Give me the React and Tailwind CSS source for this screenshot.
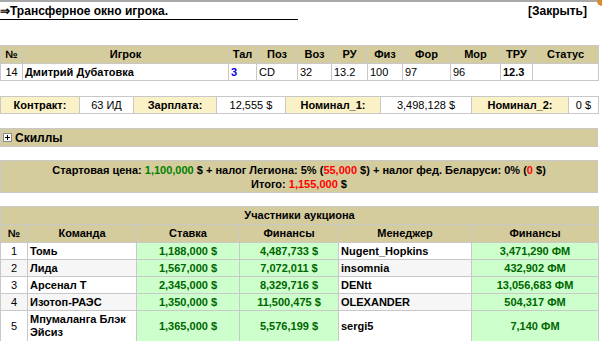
import React from 'react';

const player = {
    num: 14, name: 'Дмитрий Дубатовка', tal: 3, pos: 'CD', age: 32,
    ru: '13.2', fiz: 100, form: 97, mor: 96, tru: '12.3', status: '',
};

const bids = [
    { n: 1, team: 'Томь', bid: '1,188,000 $', fin: '4,487,733 $', manager: 'Nugent_Hopkins', mfin: '3,471,290 ФМ' },
    { n: 2, team: 'Лида', bid: '1,567,000 $', fin: '7,072,011 $', manager: 'insomnia', mfin: '432,902 ФМ' },
    { n: 3, team: 'Арсенал Т', bid: '2,345,000 $', fin: '8,329,716 $', manager: 'DENtt', mfin: '13,056,683 ФМ' },
    { n: 4, team: 'Изотоп-РАЭС', bid: '1,350,000 $', fin: '11,500,475 $', manager: 'OLEXANDER', mfin: '504,317 ФМ' },
    { n: 5, team: 'Мпумаланга Блэк Эйсиз', bid: '1,365,000 $', fin: '5,576,199 $', manager: 'sergi5', mfin: '7,140 ФМ', tall: true },
];

const th = 'border border-[#c8c8c8] bg-[#d5cc9e] font-bold text-center px-[2px] h-[18px] leading-[13px]';
const td = 'border border-[#c8c8c8] px-[2px] h-[17px] leading-[13px]';

const App = () => {
    return (
        <div className="relative w-[602px] h-[341px] bg-white text-black text-[11px] overflow-hidden" style={{ fontFamily: '"Liberation Sans", Arial, sans-serif' }}>
            <div className="absolute right-0 top-0 w-[5px] h-[6px] bg-[#d9892e] rounded-bl-[5px]" />

            <div className="border-t-2 border-[#a9a9a9] w-[597px]" />
            <div className="flex h-[18px]">
                <div className="w-[298px] border-b border-black font-bold text-[12px] leading-[14px] pt-[2px]">⇒Трансферное окно игрока.</div>
                <div className="flex-1 text-right pr-[15px] font-bold text-[12px] leading-[14px] pt-[2px]">[Закрыть]</div>
            </div>

            {/* player row */}
            <table className="mt-[25px] w-[598px] table-fixed border-collapse">
                <colgroup>
                    {[22, 206, 28, 41, 34, 36, 35, 48, 50, 32, 66].map((w, i) => <col key={i} style={{ width: w }} />)}
                </colgroup>
                <thead>
                    <tr>
                        {['№', 'Игрок', 'Тал', 'Поз', 'Воз', 'РУ', 'Физ', 'Фор', 'Мор', 'ТРУ', 'Статус'].map((h) => (
                            <th key={h} className={th}>{h}</th>
                        ))}
                    </tr>
                </thead>
                <tbody>
                    <tr>
                        <td className={`${td} text-center`}>{player.num}</td>
                        <td className={`${td} font-bold`}>{player.name}</td>
                        <td className={`${td} font-bold text-[#0000ee]`}>{player.tal}</td>
                        <td className={td}>{player.pos}</td>
                        <td className={td}>{player.age}</td>
                        <td className={td}>{player.ru}</td>
                        <td className={td}>{player.fiz}</td>
                        <td className={td}>{player.form}</td>
                        <td className={td}>{player.mor}</td>
                        <td className={`${td} font-bold`}>{player.tru}</td>
                        <td className={td}>{player.status}</td>
                    </tr>
                </tbody>
            </table>

            {/* contract */}
            <table className="mt-[15px] w-[598px] table-fixed border-collapse">
                <colgroup>
                    {[79, 54, 83, 69, 95, 91, 97, 30].map((w, i) => <col key={i} style={{ width: w }} />)}
                </colgroup>
                <tbody>
                    <tr>
                        <td className={`${td} bg-[#fbf1c6] font-bold text-center`}>Контракт:</td>
                        <td className={`${td} text-center`}>63 ИД</td>
                        <td className={`${td} bg-[#fbf1c6] font-bold text-center`}>Зарплата:</td>
                        <td className={`${td} text-center`}>12,555 $</td>
                        <td className={`${td} bg-[#fbf1c6] font-bold text-center`}>Номинал_1:</td>
                        <td className={`${td} text-center`}>3,498,128 $</td>
                        <td className={`${td} bg-[#fbf1c6] font-bold text-center`}>Номинал_2:</td>
                        <td className={`${td} text-center`}>0 $</td>
                    </tr>
                </tbody>
            </table>

            {/* skills */}
            <div className="mt-[14px] w-[598px] h-[19px] border border-[#c8c8c8] bg-[#d5cc9e] flex items-center gap-[3px] pl-[2px] font-bold text-[12px]">
                <span className="w-[9px] h-[9px] border border-[#8a8a8a] bg-white flex items-center justify-center">
                    <svg width="7" height="7" viewBox="0 0 7 7"><path d="M1 3.5h5M3.5 1v5" stroke="#000" strokeWidth="1" /></svg>
                </span>
                Скиллы
            </div>

            {/* price */}
            <div className="mt-[13px] w-[598px] h-[33px] border border-[#c8c8c8] bg-[#d5cc9e] text-center font-bold leading-[14px] pt-[2px]">
                <div>
                    Стартовая цена: <span className="text-[#008000]">1,100,000</span> $ + налог Легиона: 5% (<span className="text-[#ff0000]">55,000</span> $) + налог фед. Беларуси: 0% (<span className="text-[#ff0000]">0</span> $)
                </div>
                <div>
                    Итого: <span className="text-[#ff0000]">1,155,000</span> $
                </div>
            </div>

            {/* auction */}
            <table className="mt-[13px] w-[598px] table-fixed border-collapse">
                <colgroup>
                    {[27, 109, 103, 99, 133, 127].map((w, i) => <col key={i} style={{ width: w }} />)}
                </colgroup>
                <thead>
                    <tr>
                        <th colSpan={6} className={`${th} h-[17px]`}>Участники аукциона</th>
                    </tr>
                    <tr>
                        {['№', 'Команда', 'Ставка', 'Финансы', 'Менеджер', 'Финансы'].map((h, i) => (
                            <th key={i} className={`${th} h-[17px]`}>{h}</th>
                        ))}
                    </tr>
                </thead>
                <tbody>
                    {bids.map((b) => {
                        const rowBg = b.n % 2 === 0 ? 'bg-[#f6f6f6]' : 'bg-white';
                        const h = b.tall ? 'h-[31px]' : 'h-[16px]';
                        return (
                            <tr key={b.n}>
                                <td className={`${td} ${h} ${rowBg} text-center`}>{b.n}</td>
                                <td className={`${td} ${h} ${rowBg} font-bold`}>{b.team}</td>
                                <td className={`${td} ${h} bg-[#ccffcc] text-[#006600] font-bold text-center`}>{b.bid}</td>
                                <td className={`${td} ${h} bg-[#ccffcc] text-[#006600] font-bold text-center`}>{b.fin}</td>
                                <td className={`${td} ${h} ${rowBg} font-bold`}>{b.manager}</td>
                                <td className={`${td} ${h} bg-[#ccffcc] text-[#006600] font-bold text-center`}>{b.mfin}</td>
                            </tr>
                        );
                    })}
                </tbody>
            </table>
        </div>
    );
};

export default App;
